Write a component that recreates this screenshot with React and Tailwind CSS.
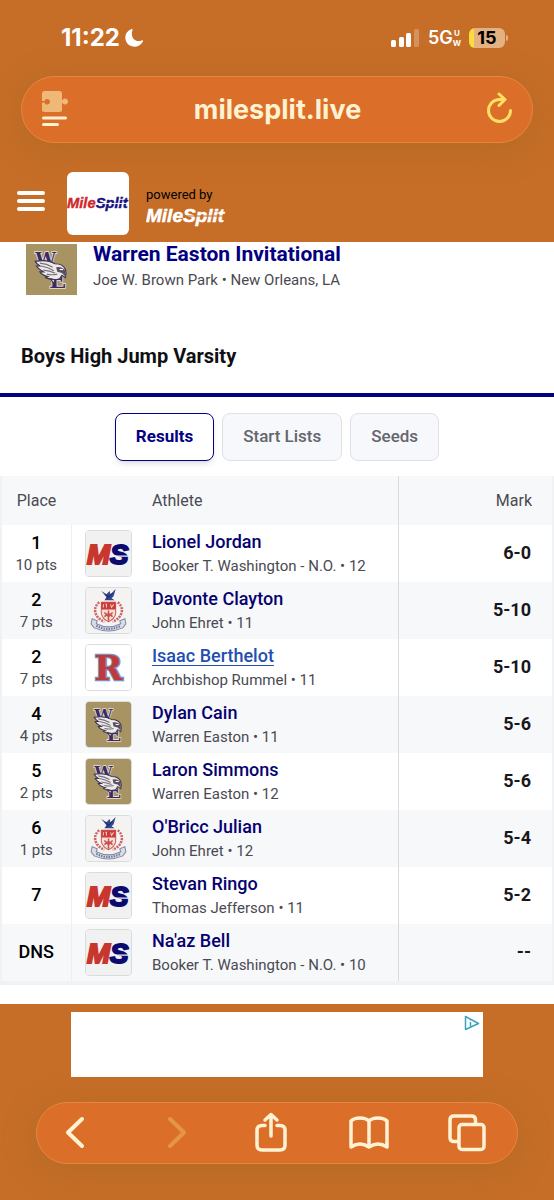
import React, { useState } from "react";

const results = [
  { place: "1", pts: "10 pts", name: "Lionel Jordan", school: "Booker T. Washington - N.O.", grade: 12, mark: "6-0", logo: "ms" },
  { place: "2", pts: "7 pts", name: "Davonte Clayton", school: "John Ehret", grade: 11, mark: "5-10", logo: "ehret" },
  { place: "2", pts: "7 pts", name: "Isaac Berthelot", school: "Archbishop Rummel", grade: 11, mark: "5-10", logo: "rummel", active: true },
  { place: "4", pts: "4 pts", name: "Dylan Cain", school: "Warren Easton", grade: 11, mark: "5-6", logo: "easton" },
  { place: "5", pts: "2 pts", name: "Laron Simmons", school: "Warren Easton", grade: 12, mark: "5-6", logo: "easton" },
  { place: "6", pts: "1 pts", name: "O'Bricc Julian", school: "John Ehret", grade: 12, mark: "5-4", logo: "ehret" },
  { place: "7", name: "Stevan Ringo", school: "Thomas Jefferson", grade: 11, mark: "5-2", logo: "ms" },
  { place: "DNS", name: "Na'az Bell", school: "Booker T. Washington - N.O.", grade: 10, mark: "--", logo: "ms" },
];

const tabs = ["Results", "Start Lists", "Seeds"];

const sans = "'Liberation Sans', sans-serif";
const slab = "'DejaVu Serif', serif";

function MileSplitLogo({ className, first, second, cut }) {
  return (
    <svg viewBox="0 0 80 22" className={className} role="img" aria-label="MileSplit">
      <text x="0" y="17" fontFamily={sans} fontSize="19" fontWeight="700" fontStyle="italic" strokeWidth="0.500">
        <tspan fill={first} stroke={first}>Mile</tspan>
        <tspan fill={second} stroke={second}>Split</tspan>
      </text>
      <path d="M37 11H80" stroke={cut} strokeWidth="1.200" />
    </svg>
  );
}

function MsLogo() {
  return (
    <svg viewBox="0 0 44 44" className="w-full h-full bg-[#f1f1f1]" aria-hidden="true">
      <text x="1" y="32" fontFamily={sans} fontSize="27" fontWeight="700" fontStyle="italic" strokeWidth="2">
        <tspan fill="#c8372d" stroke="#c8372d">M</tspan>
        <tspan fill="#0c0a6e" stroke="#0c0a6e">S</tspan>
      </text>
      <path d="M24 24.500H43" stroke="#f1f1f1" strokeWidth="1.300" />
    </svg>
  );
}

function EhretLogo() {
  return (
    <svg viewBox="0 0 44 44" className="w-full h-full bg-[#f4f3f1]" fill="none" aria-hidden="true">
      <path d="M15 3L20 6L23 3L24 6L29 1L27 8L25 10L28 12H18L20 9Z" fill="#34478f" />
      <path d="M19 6L22 9L26 5M20 11L23 8" stroke="#1f2c66" />
      <path d="M13 14C6 19 8 29 18 33M31 14C38 19 36 29 26 33" stroke="#cf6565" strokeWidth="2.500" strokeDasharray="2 1" />
      <path d="M15 14H29V25Q28 30 22 33Q16 30 15 25Z" fill="#f5dfda" stroke="#cf5a56" />
      <path d="M15 14H29V21H15Z" fill="#cd3b38" />
      <path d="M17 16V19M19 16H20V19M24 16L25 19L27 16" stroke="#f3c9c2" />
      <path d="M22 22V32M18 24L22 28L26 24M18 28L22 25L26 28" stroke="#cb4f4b" strokeWidth="1.500" />
      <path d="M6 30L11 32L10 35Q22 41 34 35L33 32L38 30L39 35L36 39Q22 45 8 39L5 35Z" fill="#dadde6" stroke="#8189a8" />
      <path d="M10 37Q22 43 34 37" stroke="#707a9f" strokeWidth="2" strokeDasharray="1.500 1" />
    </svg>
  );
}

function RummelLogo() {
  return (
    <svg viewBox="0 0 44 44" className="w-full h-full bg-white" aria-hidden="true">
      <text
        x="22"
        y="34"
        textAnchor="middle"
        fontFamily={slab}
        fontSize="33"
        fontWeight="700"
        fill="#bf3a3c"
        stroke="#7d8fbd"
        strokeWidth="2.500"
        paintOrder="stroke"
      >
        R
      </text>
    </svg>
  );
}

function EastonLogo() {
  return (
    <svg viewBox="0 0 44 44" className="w-full h-full bg-[#a89462]" aria-hidden="true">
      <g fontFamily={slab} fontWeight="700" fill="#3a2a68" stroke="#e6dfd4" strokeWidth="1.500" paintOrder="stroke">
        <text x="8" y="19" fontSize="16">W</text>
        <text x="20" y="38" fontSize="19">E</text>
      </g>
      <path d="M8 15Q18 13 25 17Q32 17 34 22Q35 25 34 29L31 27L29 30Q23 32 17 29L19 28Q14 27 12 24L15 24Q10 21 9 19L12 19Q9 17 8 15Z" fill="#ece9e6" stroke="#3b3350" />
      <path d="M12 16.500Q18 17 23 20M13 19Q19 20 24 23M15 22.500Q20 23 25 25M18 26Q22 27 27 26" stroke="#77717f" fill="none" />
      <path d="M26 20Q31 19 34 23L34 28L31 25L27 24Z" fill="#5a4d63" />
      <path d="M29 22H32" stroke="#fff" />
      <path d="M21 30L24 34L25 31Z" fill="#ece9e6" stroke="#3b3350" />
    </svg>
  );
}

const logos = { ms: MsLogo, ehret: EhretLogo, rummel: RummelLogo, easton: EastonLogo };

function StatusBar() {
  return (
    <div className="flex items-center justify-between h-[76px] pl-[61px] pr-[46px] text-white font-[Inter,sans-serif]">
      <div className="flex items-center gap-1">
        <span className="text-[24px] leading-7 font-bold">11:22</span>
        <svg viewBox="0 0 20 20" className="w-5 h-5" fill="#fff" aria-hidden="true">
          <path d="M7.500 1C2.500 3 0 8 2 13C4.500 20 15 21 19 13.500C19.300 12.500 18.500 12 17.500 12.500C11 15 6 9 8.500 2.200C8.800 1.300 8.300.700 7.500 1Z" />
        </svg>
      </div>
      <div className="flex items-center">
        <svg viewBox="0 0 30 18" className="w-[30px] h-[18px]" fill="#fff" aria-hidden="true">
          <rect x="1" y="11" width="5" height="7" rx="1.500" />
          <rect x="9" y="8" width="5" height="10" rx="1.500" />
          <rect x="16" y="4" width="5" height="14" rx="1.500" />
          <rect x="24" y="0" width="5" height="18" rx="1.500" opacity=".25" />
        </svg>
        <span className="ml-2 text-[18px] leading-6 font-semibold">5G</span>
        <span className="flex flex-col items-center text-[8px] leading-[10px] font-bold">
          <span>U</span>
          <span>W</span>
        </span>
        <span className="ml-2 w-9 h-5 rounded-md bg-linear-to-r from-[#fbdc3f] from-15% to-[#e4b181] to-15% text-black text-[18px] leading-5 font-bold text-center">
          15
        </span>
        <span className="w-[2px] h-[6px] ml-px rounded-r bg-[#e4b181]" />
      </div>
    </div>
  );
}

function AddressBar() {
  return (
    <div className="flex items-center justify-between mx-[21px] h-[67px] px-5 rounded-full border border-[#e7863c] bg-[#db6f29] shadow-[0_6px_32px_rgba(150,100,30,0.35)]">
      <button aria-label="Page menu">
        <svg viewBox="0 0 27 38" className="w-[27px] h-[38px]" aria-hidden="true">
          <rect x="0" y="0" width="20" height="21" rx="2.500" fill="#efb877" />
          <path d="M19 9H20.500A3 3 0 1 1 20.500 12H19Z" fill="#efb877" />
          <path d="M0 10H2.500A2.800 2.800 0 1 1 2.500 11.500H0Z" fill="#db6f29" />
          <path d="M1.500 27H23.500M1.500 33.500H15.500" stroke="#fff0cf" strokeWidth="3" strokeLinecap="round" />
        </svg>
      </button>
      <span className="text-[27px] leading-8 font-bold text-[#fff2d3] font-[Inter,sans-serif]">milesplit.live</span>
      <button aria-label="Reload">
        <svg viewBox="0 0 26 36" className="w-[26px] h-9" fill="none" stroke="#ffe066" strokeWidth="3" strokeLinecap="round" strokeLinejoin="round" aria-hidden="true">
          <path d="M24.500 18.500A11 11 0 1 1 13.500 7.500H18.500M13 2L19 7.500L13 13.500" />
        </svg>
      </button>
    </div>
  );
}

function SiteHeader() {
  return (
    <div className="flex items-center pt-[29px] pb-[7px] pl-[17px]">
      <button aria-label="Open menu" className="mr-[22px] mb-1">
        <svg viewBox="0 0 28 22" className="w-7 h-[22px]" stroke="#fff" strokeWidth="4" strokeLinecap="round" aria-hidden="true">
          <path d="M2 2H26M2 10H26M2 18H26" />
        </svg>
      </button>
      <a href="#home" className="flex items-center justify-center w-[62px] h-[63px] rounded-md bg-white">
        <MileSplitLogo className="w-[62px]" first="#d0282d" second="#151080" cut="#fff" />
      </a>
      <div className="ml-[17px] pt-1">
        <p className="text-[13px] leading-5 text-black">powered by</p>
        <MileSplitLogo className="w-20 h-[22px]" first="#fff" second="#fff" cut="#c66e28" />
      </div>
    </div>
  );
}

function BottomBar() {
  return (
    <nav className="flex items-center justify-between mx-9 mt-[25px] h-[62px] pl-[18px] pr-[30px] rounded-full border border-[#e7863c] bg-[#db6f29] text-[#fff2d3] shadow-[0_6px_32px_rgba(150,100,30,0.35)]">
      <button aria-label="Back" className="flex justify-center w-10">
        <svg viewBox="0 0 20 34" className="w-5 h-[34px]" fill="none" stroke="currentColor" strokeWidth="4" strokeLinecap="round" strokeLinejoin="round">
          <path d="M17 3L3 16.500L17 30" />
        </svg>
      </button>
      <button aria-label="Forward" className="flex justify-center w-10 pl-2 text-[#e59547]" disabled>
        <svg viewBox="0 0 20 34" className="w-5 h-[34px]" fill="none" stroke="currentColor" strokeWidth="4" strokeLinecap="round" strokeLinejoin="round">
          <path d="M3 3L17 16.500L3 30" />
        </svg>
      </button>
      <button aria-label="Share" className="flex justify-center w-10">
        <svg viewBox="0 0 34 42" className="w-[34px] h-[42px]" fill="none" stroke="currentColor" strokeWidth="3.500" strokeLinecap="round" strokeLinejoin="round">
          <path d="M11 13.500H8Q3 13.500 3 18.500V33Q3 38 8 38H26Q31 38 31 33V18.500Q31 13.500 26 13.500H23M17 24V3M11 8L17 2.500L23 8" />
        </svg>
      </button>
      <button aria-label="Bookmarks" className="flex justify-center w-10">
        <svg viewBox="0 0 40 34" className="w-10 h-[34px]" fill="none" stroke="currentColor" strokeWidth="3.500" strokeLinecap="round" strokeLinejoin="round">
          <path d="M20 5Q17 2 11 2Q5 2 2 5V31Q11 25 20 31Q29 25 38 31V5Q35 2 29 2Q23 2 20 5ZM20 5V31" />
        </svg>
      </button>
      <button aria-label="Tabs" className="flex justify-center w-10">
        <svg viewBox="0 0 38 38" className="w-[38px] h-[38px]" fill="none" stroke="currentColor" strokeWidth="3.500" strokeLinejoin="round">
          <rect x="11" y="10.500" width="25" height="25" rx="3" />
          <path d="M11 27.500H6Q2 27.500 2 23.500V6Q2 2 6 2H23.500Q27.500 2 27.500 6V10" />
        </svg>
      </button>
    </nav>
  );
}

function ResultRow({ row, striped }) {
  const Logo = logos[row.logo];
  return (
    <tr className={striped ? "h-[57px] bg-[#f7f8fa]" : "h-[57px] bg-white"}>
      <td className="border-r border-[#eeeff2] text-center pt-0 px-0 pb-[2px]">
        <p className="text-[18px] leading-6 font-medium text-black">{row.place}</p>
        {row.pts && <p className="text-[15px] leading-5">{row.pts}</p>}
      </td>
      <td className="py-0 pl-[13px] pr-0">
        <div className="w-[47px] h-[47px] rounded-sm border border-[#dcdcde] overflow-hidden">
          <Logo />
        </div>
      </td>
      <td className="p-0">
        <a
          href="#athlete"
          className={
            row.active
              ? "block w-fit text-[18px] leading-6 font-medium text-[#1f4fb0] underline underline-offset-3"
              : "block w-fit text-[18px] leading-6 font-medium text-[#050270]"
          }
        >
          {row.name}
        </a>
        <p className="text-[15px] leading-6">
          {row.school} • {row.grade}
        </p>
      </td>
      <td className="border-l border-[#dadbde] pt-0 pl-0 pb-[3px] pr-[21px] text-right text-[18px] font-bold text-[#17171c]">
        {row.mark}
      </td>
    </tr>
  );
}

function App() {
  const [tab, setTab] = useState("Results");

  return (
    <div className="bg-[#c66e28] text-[#4a4a52] font-[Roboto,sans-serif] pb-9">
      <StatusBar />
      <AddressBar />
      <SiteHeader />

      <main className="bg-white pb-[19px]">
        <div className="flex pt-[2px] pl-[26px] gap-4">
          <div className="w-[51px] h-[51px]">
            <EastonLogo />
          </div>
          <div>
            <h1 className="text-[21px] leading-5 font-bold text-[#030082]">Warren Easton Invitational</h1>
            <p className="mt-1 text-[15px] leading-6">Joe W. Brown Park • New Orleans, LA</p>
          </div>
        </div>

        <h2 className="mt-[47px] pb-[23px] px-[21px] text-[20px] leading-7 font-bold text-[#0f0f14] border-b-4 border-[#030082]">
          Boys High Jump Varsity
        </h2>

        {/* Tabs */}
        <div className="flex justify-center gap-2 pt-4 pb-[15px]">
          {tabs.map((t) => (
            <button
              key={t}
              onClick={() => setTab(t)}
              className={
                t === tab
                  ? "h-12 px-5 rounded-lg border border-[#030082] bg-white text-[17px] font-bold text-[#030082] shadow-md"
                  : "h-12 px-5 rounded-lg border border-[#dfe1e6] bg-[#f7f8fb] text-[17px] font-medium text-[#65656d]"
              }
            >
              {t}
            </button>
          ))}
        </div>

        {/* Results table */}
        <div className="border-x-2 border-b-4 border-[#f1f2f4]">
          <table className="w-full table-fixed border-collapse">
            <colgroup>
              <col className="w-[69px]" />
              <col className="w-[81px]" />
              <col />
              <col className="w-[28%]" />
            </colgroup>
            <thead>
              <tr className="h-[49px] bg-[#f7f8fa] text-[16px]">
                <th className="font-normal p-0" scope="col">Place</th>
                <th className="p-0" aria-label="Team" />
                <th className="font-normal text-left p-0" scope="col">Athlete</th>
                <th className="font-normal text-right py-0 pl-0 pr-5 border-l border-[#dadbde]" scope="col">Mark</th>
              </tr>
            </thead>
            <tbody>
              {results.map((row, i) => (
                <ResultRow key={row.name} row={row} striped={i % 2 === 1} />
              ))}
            </tbody>
          </table>
        </div>
      </main>

      {/* Ad slot */}
      <div className="flex justify-end mt-2 mx-[71px] h-[65px] bg-white p-[2px]">
        <svg viewBox="0 0 18 18" className="w-[18px] h-[18px]" fill="none" stroke="#3da3bd" strokeWidth="1.500" strokeLinejoin="round" aria-label="Ad choices">
          <path d="M2.500 2.500L15.500 9.500L2.500 15.500ZM7.500 8V13M7.500 5.500V6.500" />
        </svg>
      </div>

      <BottomBar />
    </div>
  );
}

export default App;
